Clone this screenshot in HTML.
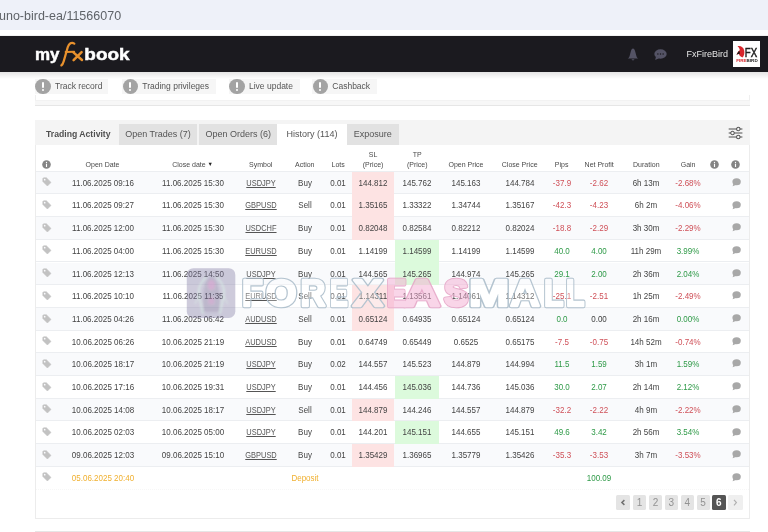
<!DOCTYPE html>
<html><head><meta charset="utf-8">
<style>
*{margin:0;padding:0;box-sizing:border-box}
html,body{width:768px;height:532px;overflow:hidden;background:#fff;font-family:"Liberation Sans",sans-serif;position:relative}
#root{position:absolute;left:0;top:0;width:768px;height:532px;will-change:transform}
.a{position:absolute}
svg{display:block}
.ct{position:absolute;width:100px;text-align:center;white-space:nowrap}
.d{font-size:9px;color:#444;transform:scaleX(0.89)}
.sym{color:#555;font-size:8.4px}
.sym u{text-decoration:underline;text-underline-offset:1px}
.row{position:absolute;left:36px;width:713px;border-bottom:1px solid #eceef1}
.ht{position:absolute;width:100px;text-align:center;white-space:nowrap;font-size:7px;color:#4a4a4a;line-height:10px}
.caret{font-size:5.5px;position:relative;top:-1px;color:#222}
.url{position:absolute;left:0;top:0;width:768px;height:29.5px;background:#eef1f9}
.urltxt{position:absolute;left:-1px;top:7px;font-size:13.3px;line-height:18px;color:#5f6368;transform:scaleX(0.94);transform-origin:0 0;white-space:nowrap}
.nav{position:absolute;left:0;top:36px;width:768px;height:36px;background:#1b1a1f}
.btn{position:absolute;top:79px;height:14.5px;background:#f6f6f6}
.btn .ic{position:absolute;left:0.3px;top:-0.3px;width:15.4px;height:15.4px;border-radius:50%;background:#a3a3a3}
.btn .ic:before{content:"";position:absolute;left:6.6px;top:3.1px;width:2.2px;height:6.5px;background:#fff;border-radius:1px}
.btn .ic:after{content:"";position:absolute;left:6.6px;top:10.3px;width:2.2px;height:2.2px;background:#fff;border-radius:1px}
.btn .t{position:absolute;top:0;left:20px;font-size:8.5px;line-height:14.5px;color:#555;white-space:nowrap}
.tab{position:absolute;top:124px;height:21px;font-size:9px;line-height:21px;color:#555;text-align:center;white-space:nowrap}
.pg{position:absolute;top:495.2px;height:15.3px;width:13px;background:#e4e4e4;color:#929292;font-size:10px;line-height:15.3px;text-align:center;border-radius:1.5px}
.pg svg{position:absolute;left:0;top:0}
</style></head><body><div id="root">
<div class="url"><div class="urltxt">uno-bird-ea/11566070</div></div>
<div class="a" style="left:0;top:34.8px;width:768px;height:1.2px;background:#f1f1f1"></div>
<div class="nav">
  <svg class="a" style="left:0;top:0" width="140" height="36" viewBox="0 36 140 36"><text x="35" y="59.6" font-family="Liberation Sans" font-weight="bold" font-size="17" fill="#fff" stroke="#fff" stroke-width="0.5" textLength="24.5" lengthAdjust="spacingAndGlyphs">my</text><path d="M74.3 43.6 C71.5 41.8 69 43.5 67.8 47 L63.8 61 C63 63.8 62.2 65 61.4 65.4" stroke="#e8912d" stroke-width="2.3" fill="none" stroke-linecap="round"/><path d="M65.6 52 L74.2 51.8" stroke="#e8912d" stroke-width="1.9" stroke-linecap="round"/><path d="M73.4 52.4 L82 60 M81.6 52.2 L73.6 60.2" stroke="#e8912d" stroke-width="2.5" stroke-linecap="round"/><text x="84.3" y="59.6" font-family="Liberation Sans" font-weight="bold" font-size="17" fill="#fff" stroke="#fff" stroke-width="0.5" textLength="45.3" lengthAdjust="spacingAndGlyphs">book</text></svg>
  <svg class="a" style="left:626.5px;top:11.5px" width="12" height="13" viewBox="0 0 12 13"><path d="M6 0.6 C5 0.6 4.3 1.8 3.8 3.6 L2.6 8 C2.2 9.4 1.4 10.2 0.6 10.6 L11.4 10.6 C10.6 10.2 9.8 9.4 9.4 8 L8.2 3.6 C7.7 1.8 7 0.6 6 0.6 Z" fill="#545365"/><path d="M4.6 11.3 L7.4 11.3 C7.3 12 6.8 12.4 6 12.4 C5.2 12.4 4.7 12 4.6 11.3Z" fill="#545365"/></svg>
  <svg class="a" style="left:654px;top:12.6px" width="13" height="12" viewBox="0 0 13 12"><ellipse cx="6.5" cy="5" rx="6.2" ry="4.7" fill="#545365"/><path d="M2 7.6 L1.2 11 L5 9.2 Z" fill="#545365"/><circle cx="3.9" cy="5" r="0.75" fill="#1b1a1f"/><circle cx="6.5" cy="5" r="0.75" fill="#1b1a1f"/><circle cx="9.1" cy="5" r="0.75" fill="#1b1a1f"/></svg>
  <div class="a" style="left:686.5px;top:11px;font-size:9px;line-height:14px;color:#e6e6e6;white-space:nowrap">FxFireBird</div>
  <div class="a" style="left:733px;top:4.8px;width:27.2px;height:26.2px;background:#fff">
    <svg width="27" height="26" viewBox="0 0 27 26"><path d="M4.5 5.2 C8 4.6 10.5 6.5 11.2 9.5 C11.8 12.5 11 15 9.5 16.4 C7.5 16 6.2 14.6 5.8 12.8 L3.6 13.6 C4.2 11.5 5.4 10 6.8 9.2 C6.6 7.6 5.8 6.2 4.5 5.2Z" fill="#d8262c"/><path d="M3.4 13.8 L6.2 9.6 L7 12.4 Z" fill="#1a1a1a"/><text x="11.8" y="16.4" font-family="Liberation Sans" font-size="12" fill="#1f1f1f" stroke="#1f1f1f" stroke-width="0.5" textLength="12.4" lengthAdjust="spacingAndGlyphs">FX</text><text x="3.2" y="21.2" font-family="Liberation Sans" font-weight="bold" font-size="4" fill="#d8262c" textLength="21.5" lengthAdjust="spacingAndGlyphs">FIRE<tspan fill="#1f1f1f">BIRD</tspan></text></svg>
  </div>
</div>
<div class="a" style="left:0;top:72px;width:768px;height:7px;background:linear-gradient(#e4e4e4,#fff)"></div>
<div class="btn" style="left:35px;width:73px"><div class="ic"></div><div class="t">Track record</div></div>
<div class="btn" style="left:122.3px;width:93.5px"><div class="ic"></div><div class="t">Trading privileges</div></div>
<div class="btn" style="left:229px;width:71px"><div class="ic"></div><div class="t">Live update</div></div>
<div class="btn" style="left:312.3px;width:64.6px"><div class="ic"></div><div class="t">Cashback</div></div>
<!-- top card bottom -->
<div class="a" style="left:35px;top:95px;width:1px;height:11px;background:#efefef"></div>
<div class="a" style="left:749px;top:95px;width:1px;height:11px;background:#efefef"></div>
<div class="a" style="left:35px;top:99.8px;width:715px;height:6.6px;background:#f7f7f7;border-top:1px solid #f2f2f2;border-bottom:1px solid #e6e6e6"></div>
<!-- table card -->
<div class="a" style="left:35px;top:120px;width:715px;height:398.8px;border:1px solid #ececec;border-top:none"></div>
<div class="a" style="left:35px;top:120px;width:715px;height:25px;background:#f4f4f4"></div>
<div class="tab" style="left:46.2px;width:auto;color:#505050;font-size:9.3px;font-weight:bold;text-align:left;transform:scaleX(0.93);transform-origin:0 0">Trading Activity</div>
<div class="tab" style="left:118.8px;width:78.3px;background:#e2e2e2">Open Trades (7)</div>
<div class="tab" style="left:199.3px;width:77.7px;background:#e2e2e2">Open Orders (6)</div>
<div class="tab" style="left:277px;width:70px;background:#fff;height:21px">History (114)</div>
<div class="tab" style="left:347px;width:51.7px;background:#e2e2e2">Exposure</div>
<svg class="a" style="left:727.5px;top:125.5px" width="15" height="14" viewBox="0 0 15 14"><g stroke="#555" stroke-width="1.05" fill="none"><line x1="0.7" y1="3" x2="14.4" y2="3"/><line x1="0.7" y1="7" x2="14.4" y2="7"/><line x1="0.7" y1="11" x2="14.4" y2="11"/><circle cx="10.3" cy="3" r="1.75" fill="#f4f4f4"/><circle cx="4.5" cy="7" r="1.75" fill="#f4f4f4"/><circle cx="10.3" cy="11" r="1.75" fill="#f4f4f4"/></g></svg>
<div class="a" style="left:36px;top:170.8px;width:713px;height:1px;background:#eceef1"></div>
<div class="a" style="left:42.3px;top:159.9px;width:9px;height:9px"><svg width="9" height="9" viewBox="0 0 9 9"><circle cx="4.5" cy="4.5" r="4.3" fill="#858585"/><rect x="3.95" y="3.8" width="1.1" height="3.2" fill="#fff"/><circle cx="4.5" cy="2.5" r="0.65" fill="#fff"/></svg></div>
<div class="ht" style="left:52.50px;top:159.50px">Open Date</div>
<div class="ht" style="left:142.60px;top:159.50px">Close date <span class="caret">&#9660;</span></div>
<div class="ht" style="left:210.70px;top:159.50px">Symbol</div>
<div class="ht" style="left:254.80px;top:159.50px">Action</div>
<div class="ht" style="left:288.20px;top:159.50px">Lots</div>
<div class="ht" style="left:323.10px;top:149.50px">SL</div>
<div class="ht" style="left:323.10px;top:159.50px">(Price)</div>
<div class="ht" style="left:367.20px;top:149.50px">TP</div>
<div class="ht" style="left:367.20px;top:159.50px">(Price)</div>
<div class="ht" style="left:416.00px;top:159.50px">Open Price</div>
<div class="ht" style="left:469.70px;top:159.50px">Close Price</div>
<div class="ht" style="left:511.60px;top:159.50px">Pips</div>
<div class="ht" style="left:549.20px;top:159.50px">Net Profit</div>
<div class="ht" style="left:596.30px;top:159.50px">Duration</div>
<div class="ht" style="left:638.10px;top:159.50px">Gain</div>
<div class="a" style="left:710.1px;top:159.5px;width:9px;height:9px"><svg width="9" height="9" viewBox="0 0 9 9"><circle cx="4.5" cy="4.5" r="4.3" fill="#858585"/><rect x="3.95" y="3.8" width="1.1" height="3.2" fill="#fff"/><circle cx="4.5" cy="2.5" r="0.65" fill="#fff"/></svg></div>
<div class="a" style="left:731.1px;top:159.5px;width:9px;height:9px"><svg width="9" height="9" viewBox="0 0 9 9"><circle cx="4.5" cy="4.5" r="4.3" fill="#858585"/><rect x="3.95" y="3.8" width="1.1" height="3.2" fill="#fff"/><circle cx="4.5" cy="2.5" r="0.65" fill="#fff"/></svg></div>
<div class="row" style="top:171.70px;height:22.70px;background:#f9fafc"></div>
<div class="a" style="left:352px;width:42px;top:171.70px;height:23.30px;background:#fde3e3"></div>
<div class="row" style="top:194.40px;height:22.70px;background:#ffffff"></div>
<div class="a" style="left:352px;width:42px;top:194.40px;height:23.30px;background:#fde3e3"></div>
<div class="row" style="top:217.10px;height:22.70px;background:#f9fafc"></div>
<div class="a" style="left:352px;width:42px;top:217.10px;height:23.30px;background:#fde3e3"></div>
<div class="row" style="top:239.80px;height:22.70px;background:#ffffff"></div>
<div class="a" style="left:395px;width:44px;top:239.80px;height:23.30px;background:#dcfadc"></div>
<div class="row" style="top:262.50px;height:22.70px;background:#f9fafc"></div>
<div class="a" style="left:395px;width:44px;top:262.50px;height:23.30px;background:#dcfadc"></div>
<div class="row" style="top:285.20px;height:22.70px;background:#ffffff"></div>
<div class="a" style="left:352px;width:42px;top:285.20px;height:23.30px;background:#fde3e3"></div>
<div class="row" style="top:307.90px;height:22.70px;background:#f9fafc"></div>
<div class="a" style="left:352px;width:42px;top:307.90px;height:23.30px;background:#fde3e3"></div>
<div class="row" style="top:330.60px;height:22.70px;background:#ffffff"></div>
<div class="row" style="top:353.30px;height:22.70px;background:#f9fafc"></div>
<div class="row" style="top:376.00px;height:22.70px;background:#ffffff"></div>
<div class="a" style="left:395px;width:44px;top:376.00px;height:23.30px;background:#dcfadc"></div>
<div class="row" style="top:398.70px;height:22.70px;background:#f9fafc"></div>
<div class="a" style="left:352px;width:42px;top:398.70px;height:23.30px;background:#fde3e3"></div>
<div class="row" style="top:421.40px;height:22.70px;background:#ffffff"></div>
<div class="a" style="left:395px;width:44px;top:421.40px;height:23.30px;background:#dcfadc"></div>
<div class="row" style="top:444.10px;height:22.70px;background:#f9fafc"></div>
<div class="a" style="left:352px;width:42px;top:444.10px;height:23.30px;background:#fde3e3"></div>
<div class="a" style="left:42px;top:177.30px;width:10px;height:10px"><svg width="10" height="10" viewBox="0 0 10 10"><path d="M0.8 1.6 L0.8 4.4 L5.4 9 L9 5.4 L4.4 0.8 L1.6 0.8 Z" fill="#c2c2c2" stroke="#c2c2c2" stroke-width="0.6" stroke-linejoin="round"/><circle cx="2.7" cy="2.7" r="0.85" fill="#fafbfd"/></svg></div>
<div class="ct d" style="left:52.50px;top:171.70px;height:22.70px;line-height:22.70px;">11.06.2025 09:16</div>
<div class="ct d" style="left:142.60px;top:171.70px;height:22.70px;line-height:22.70px;">11.06.2025 15:30</div>
<div class="ct d sym" style="left:210.70px;top:171.70px;height:22.70px;line-height:22.70px;"><u>USDJPY</u></div>
<div class="ct d" style="left:254.80px;top:171.70px;height:22.70px;line-height:22.70px;">Buy</div>
<div class="ct d" style="left:288.20px;top:171.70px;height:22.70px;line-height:22.70px;">0.01</div>
<div class="ct d" style="left:323.10px;top:171.70px;height:22.70px;line-height:22.70px;">144.812</div>
<div class="ct d" style="left:367.20px;top:171.70px;height:22.70px;line-height:22.70px;">145.762</div>
<div class="ct d" style="left:416.00px;top:171.70px;height:22.70px;line-height:22.70px;">145.163</div>
<div class="ct d" style="left:469.70px;top:171.70px;height:22.70px;line-height:22.70px;">144.784</div>
<div class="ct d" style="left:511.60px;top:171.70px;height:22.70px;line-height:22.70px;color:#cf5058">-37.9</div>
<div class="ct d" style="left:549.20px;top:171.70px;height:22.70px;line-height:22.70px;color:#cf5058">-2.62</div>
<div class="ct d" style="left:596.30px;top:171.70px;height:22.70px;line-height:22.70px;">6h 13m</div>
<div class="ct d" style="left:638.10px;top:171.70px;height:22.70px;line-height:22.70px;color:#cf5058">-2.68%</div>
<div class="a" style="left:731.5px;top:177.80px;width:10px;height:9px"><svg width="10" height="9" viewBox="0 0 10 9"><ellipse cx="4.6" cy="3.7" rx="4.2" ry="3.5" fill="#a8a8a8"/><path d="M1.5 5.6 L0.6 8.3 L3.8 6.9 Z" fill="#a8a8a8"/></svg></div>
<div class="a" style="left:42px;top:200.00px;width:10px;height:10px"><svg width="10" height="10" viewBox="0 0 10 10"><path d="M0.8 1.6 L0.8 4.4 L5.4 9 L9 5.4 L4.4 0.8 L1.6 0.8 Z" fill="#c2c2c2" stroke="#c2c2c2" stroke-width="0.6" stroke-linejoin="round"/><circle cx="2.7" cy="2.7" r="0.85" fill="#fafbfd"/></svg></div>
<div class="ct d" style="left:52.50px;top:194.40px;height:22.70px;line-height:22.70px;">11.06.2025 09:27</div>
<div class="ct d" style="left:142.60px;top:194.40px;height:22.70px;line-height:22.70px;">11.06.2025 15:30</div>
<div class="ct d sym" style="left:210.70px;top:194.40px;height:22.70px;line-height:22.70px;"><u>GBPUSD</u></div>
<div class="ct d" style="left:254.80px;top:194.40px;height:22.70px;line-height:22.70px;">Sell</div>
<div class="ct d" style="left:288.20px;top:194.40px;height:22.70px;line-height:22.70px;">0.01</div>
<div class="ct d" style="left:323.10px;top:194.40px;height:22.70px;line-height:22.70px;">1.35165</div>
<div class="ct d" style="left:367.20px;top:194.40px;height:22.70px;line-height:22.70px;">1.33322</div>
<div class="ct d" style="left:416.00px;top:194.40px;height:22.70px;line-height:22.70px;">1.34744</div>
<div class="ct d" style="left:469.70px;top:194.40px;height:22.70px;line-height:22.70px;">1.35167</div>
<div class="ct d" style="left:511.60px;top:194.40px;height:22.70px;line-height:22.70px;color:#cf5058">-42.3</div>
<div class="ct d" style="left:549.20px;top:194.40px;height:22.70px;line-height:22.70px;color:#cf5058">-4.23</div>
<div class="ct d" style="left:596.30px;top:194.40px;height:22.70px;line-height:22.70px;">6h 2m</div>
<div class="ct d" style="left:638.10px;top:194.40px;height:22.70px;line-height:22.70px;color:#cf5058">-4.06%</div>
<div class="a" style="left:731.5px;top:200.50px;width:10px;height:9px"><svg width="10" height="9" viewBox="0 0 10 9"><ellipse cx="4.6" cy="3.7" rx="4.2" ry="3.5" fill="#a8a8a8"/><path d="M1.5 5.6 L0.6 8.3 L3.8 6.9 Z" fill="#a8a8a8"/></svg></div>
<div class="a" style="left:42px;top:222.70px;width:10px;height:10px"><svg width="10" height="10" viewBox="0 0 10 10"><path d="M0.8 1.6 L0.8 4.4 L5.4 9 L9 5.4 L4.4 0.8 L1.6 0.8 Z" fill="#c2c2c2" stroke="#c2c2c2" stroke-width="0.6" stroke-linejoin="round"/><circle cx="2.7" cy="2.7" r="0.85" fill="#fafbfd"/></svg></div>
<div class="ct d" style="left:52.50px;top:217.10px;height:22.70px;line-height:22.70px;">11.06.2025 12:00</div>
<div class="ct d" style="left:142.60px;top:217.10px;height:22.70px;line-height:22.70px;">11.06.2025 15:30</div>
<div class="ct d sym" style="left:210.70px;top:217.10px;height:22.70px;line-height:22.70px;"><u>USDCHF</u></div>
<div class="ct d" style="left:254.80px;top:217.10px;height:22.70px;line-height:22.70px;">Buy</div>
<div class="ct d" style="left:288.20px;top:217.10px;height:22.70px;line-height:22.70px;">0.01</div>
<div class="ct d" style="left:323.10px;top:217.10px;height:22.70px;line-height:22.70px;">0.82048</div>
<div class="ct d" style="left:367.20px;top:217.10px;height:22.70px;line-height:22.70px;">0.82584</div>
<div class="ct d" style="left:416.00px;top:217.10px;height:22.70px;line-height:22.70px;">0.82212</div>
<div class="ct d" style="left:469.70px;top:217.10px;height:22.70px;line-height:22.70px;">0.82024</div>
<div class="ct d" style="left:511.60px;top:217.10px;height:22.70px;line-height:22.70px;color:#cf5058">-18.8</div>
<div class="ct d" style="left:549.20px;top:217.10px;height:22.70px;line-height:22.70px;color:#cf5058">-2.29</div>
<div class="ct d" style="left:596.30px;top:217.10px;height:22.70px;line-height:22.70px;">3h 30m</div>
<div class="ct d" style="left:638.10px;top:217.10px;height:22.70px;line-height:22.70px;color:#cf5058">-2.29%</div>
<div class="a" style="left:731.5px;top:223.20px;width:10px;height:9px"><svg width="10" height="9" viewBox="0 0 10 9"><ellipse cx="4.6" cy="3.7" rx="4.2" ry="3.5" fill="#a8a8a8"/><path d="M1.5 5.6 L0.6 8.3 L3.8 6.9 Z" fill="#a8a8a8"/></svg></div>
<div class="a" style="left:42px;top:245.40px;width:10px;height:10px"><svg width="10" height="10" viewBox="0 0 10 10"><path d="M0.8 1.6 L0.8 4.4 L5.4 9 L9 5.4 L4.4 0.8 L1.6 0.8 Z" fill="#c2c2c2" stroke="#c2c2c2" stroke-width="0.6" stroke-linejoin="round"/><circle cx="2.7" cy="2.7" r="0.85" fill="#fafbfd"/></svg></div>
<div class="ct d" style="left:52.50px;top:239.80px;height:22.70px;line-height:22.70px;">11.06.2025 04:00</div>
<div class="ct d" style="left:142.60px;top:239.80px;height:22.70px;line-height:22.70px;">11.06.2025 15:30</div>
<div class="ct d sym" style="left:210.70px;top:239.80px;height:22.70px;line-height:22.70px;"><u>EURUSD</u></div>
<div class="ct d" style="left:254.80px;top:239.80px;height:22.70px;line-height:22.70px;">Buy</div>
<div class="ct d" style="left:288.20px;top:239.80px;height:22.70px;line-height:22.70px;">0.01</div>
<div class="ct d" style="left:323.10px;top:239.80px;height:22.70px;line-height:22.70px;">1.14199</div>
<div class="ct d" style="left:367.20px;top:239.80px;height:22.70px;line-height:22.70px;">1.14599</div>
<div class="ct d" style="left:416.00px;top:239.80px;height:22.70px;line-height:22.70px;">1.14199</div>
<div class="ct d" style="left:469.70px;top:239.80px;height:22.70px;line-height:22.70px;">1.14599</div>
<div class="ct d" style="left:511.60px;top:239.80px;height:22.70px;line-height:22.70px;color:#2f9a48">40.0</div>
<div class="ct d" style="left:549.20px;top:239.80px;height:22.70px;line-height:22.70px;color:#2f9a48">4.00</div>
<div class="ct d" style="left:596.30px;top:239.80px;height:22.70px;line-height:22.70px;">11h 29m</div>
<div class="ct d" style="left:638.10px;top:239.80px;height:22.70px;line-height:22.70px;color:#2f9a48">3.99%</div>
<div class="a" style="left:731.5px;top:245.90px;width:10px;height:9px"><svg width="10" height="9" viewBox="0 0 10 9"><ellipse cx="4.6" cy="3.7" rx="4.2" ry="3.5" fill="#a8a8a8"/><path d="M1.5 5.6 L0.6 8.3 L3.8 6.9 Z" fill="#a8a8a8"/></svg></div>
<div class="a" style="left:42px;top:268.10px;width:10px;height:10px"><svg width="10" height="10" viewBox="0 0 10 10"><path d="M0.8 1.6 L0.8 4.4 L5.4 9 L9 5.4 L4.4 0.8 L1.6 0.8 Z" fill="#c2c2c2" stroke="#c2c2c2" stroke-width="0.6" stroke-linejoin="round"/><circle cx="2.7" cy="2.7" r="0.85" fill="#fafbfd"/></svg></div>
<div class="ct d" style="left:52.50px;top:262.50px;height:22.70px;line-height:22.70px;">11.06.2025 12:13</div>
<div class="ct d" style="left:142.60px;top:262.50px;height:22.70px;line-height:22.70px;">11.06.2025 14:50</div>
<div class="ct d sym" style="left:210.70px;top:262.50px;height:22.70px;line-height:22.70px;"><u>USDJPY</u></div>
<div class="ct d" style="left:254.80px;top:262.50px;height:22.70px;line-height:22.70px;">Buy</div>
<div class="ct d" style="left:288.20px;top:262.50px;height:22.70px;line-height:22.70px;">0.01</div>
<div class="ct d" style="left:323.10px;top:262.50px;height:22.70px;line-height:22.70px;">144.565</div>
<div class="ct d" style="left:367.20px;top:262.50px;height:22.70px;line-height:22.70px;">145.265</div>
<div class="ct d" style="left:416.00px;top:262.50px;height:22.70px;line-height:22.70px;">144.974</div>
<div class="ct d" style="left:469.70px;top:262.50px;height:22.70px;line-height:22.70px;">145.265</div>
<div class="ct d" style="left:511.60px;top:262.50px;height:22.70px;line-height:22.70px;color:#2f9a48">29.1</div>
<div class="ct d" style="left:549.20px;top:262.50px;height:22.70px;line-height:22.70px;color:#2f9a48">2.00</div>
<div class="ct d" style="left:596.30px;top:262.50px;height:22.70px;line-height:22.70px;">2h 36m</div>
<div class="ct d" style="left:638.10px;top:262.50px;height:22.70px;line-height:22.70px;color:#2f9a48">2.04%</div>
<div class="a" style="left:731.5px;top:268.60px;width:10px;height:9px"><svg width="10" height="9" viewBox="0 0 10 9"><ellipse cx="4.6" cy="3.7" rx="4.2" ry="3.5" fill="#a8a8a8"/><path d="M1.5 5.6 L0.6 8.3 L3.8 6.9 Z" fill="#a8a8a8"/></svg></div>
<div class="a" style="left:42px;top:290.80px;width:10px;height:10px"><svg width="10" height="10" viewBox="0 0 10 10"><path d="M0.8 1.6 L0.8 4.4 L5.4 9 L9 5.4 L4.4 0.8 L1.6 0.8 Z" fill="#c2c2c2" stroke="#c2c2c2" stroke-width="0.6" stroke-linejoin="round"/><circle cx="2.7" cy="2.7" r="0.85" fill="#fafbfd"/></svg></div>
<div class="ct d" style="left:52.50px;top:285.20px;height:22.70px;line-height:22.70px;">11.06.2025 10:10</div>
<div class="ct d" style="left:142.60px;top:285.20px;height:22.70px;line-height:22.70px;">11.06.2025 11:35</div>
<div class="ct d sym" style="left:210.70px;top:285.20px;height:22.70px;line-height:22.70px;"><u>EURUSD</u></div>
<div class="ct d" style="left:254.80px;top:285.20px;height:22.70px;line-height:22.70px;">Sell</div>
<div class="ct d" style="left:288.20px;top:285.20px;height:22.70px;line-height:22.70px;">0.01</div>
<div class="ct d" style="left:323.10px;top:285.20px;height:22.70px;line-height:22.70px;">1.14311</div>
<div class="ct d" style="left:367.20px;top:285.20px;height:22.70px;line-height:22.70px;">1.13561</div>
<div class="ct d" style="left:416.00px;top:285.20px;height:22.70px;line-height:22.70px;">1.14061</div>
<div class="ct d" style="left:469.70px;top:285.20px;height:22.70px;line-height:22.70px;">1.14312</div>
<div class="ct d" style="left:511.60px;top:285.20px;height:22.70px;line-height:22.70px;color:#cf5058">-25.1</div>
<div class="ct d" style="left:549.20px;top:285.20px;height:22.70px;line-height:22.70px;color:#cf5058">-2.51</div>
<div class="ct d" style="left:596.30px;top:285.20px;height:22.70px;line-height:22.70px;">1h 25m</div>
<div class="ct d" style="left:638.10px;top:285.20px;height:22.70px;line-height:22.70px;color:#cf5058">-2.49%</div>
<div class="a" style="left:731.5px;top:291.30px;width:10px;height:9px"><svg width="10" height="9" viewBox="0 0 10 9"><ellipse cx="4.6" cy="3.7" rx="4.2" ry="3.5" fill="#a8a8a8"/><path d="M1.5 5.6 L0.6 8.3 L3.8 6.9 Z" fill="#a8a8a8"/></svg></div>
<div class="a" style="left:42px;top:313.50px;width:10px;height:10px"><svg width="10" height="10" viewBox="0 0 10 10"><path d="M0.8 1.6 L0.8 4.4 L5.4 9 L9 5.4 L4.4 0.8 L1.6 0.8 Z" fill="#c2c2c2" stroke="#c2c2c2" stroke-width="0.6" stroke-linejoin="round"/><circle cx="2.7" cy="2.7" r="0.85" fill="#fafbfd"/></svg></div>
<div class="ct d" style="left:52.50px;top:307.90px;height:22.70px;line-height:22.70px;">11.06.2025 04:26</div>
<div class="ct d" style="left:142.60px;top:307.90px;height:22.70px;line-height:22.70px;">11.06.2025 06:42</div>
<div class="ct d sym" style="left:210.70px;top:307.90px;height:22.70px;line-height:22.70px;"><u>AUDUSD</u></div>
<div class="ct d" style="left:254.80px;top:307.90px;height:22.70px;line-height:22.70px;">Sell</div>
<div class="ct d" style="left:288.20px;top:307.90px;height:22.70px;line-height:22.70px;">0.01</div>
<div class="ct d" style="left:323.10px;top:307.90px;height:22.70px;line-height:22.70px;">0.65124</div>
<div class="ct d" style="left:367.20px;top:307.90px;height:22.70px;line-height:22.70px;">0.64935</div>
<div class="ct d" style="left:416.00px;top:307.90px;height:22.70px;line-height:22.70px;">0.65124</div>
<div class="ct d" style="left:469.70px;top:307.90px;height:22.70px;line-height:22.70px;">0.65124</div>
<div class="ct d" style="left:511.60px;top:307.90px;height:22.70px;line-height:22.70px;color:#2f9a48">0.0</div>
<div class="ct d" style="left:549.20px;top:307.90px;height:22.70px;line-height:22.70px;color:#3d3d3d">0.00</div>
<div class="ct d" style="left:596.30px;top:307.90px;height:22.70px;line-height:22.70px;">2h 16m</div>
<div class="ct d" style="left:638.10px;top:307.90px;height:22.70px;line-height:22.70px;color:#2f9a48">0.00%</div>
<div class="a" style="left:731.5px;top:314.00px;width:10px;height:9px"><svg width="10" height="9" viewBox="0 0 10 9"><ellipse cx="4.6" cy="3.7" rx="4.2" ry="3.5" fill="#a8a8a8"/><path d="M1.5 5.6 L0.6 8.3 L3.8 6.9 Z" fill="#a8a8a8"/></svg></div>
<div class="a" style="left:42px;top:336.20px;width:10px;height:10px"><svg width="10" height="10" viewBox="0 0 10 10"><path d="M0.8 1.6 L0.8 4.4 L5.4 9 L9 5.4 L4.4 0.8 L1.6 0.8 Z" fill="#c2c2c2" stroke="#c2c2c2" stroke-width="0.6" stroke-linejoin="round"/><circle cx="2.7" cy="2.7" r="0.85" fill="#fafbfd"/></svg></div>
<div class="ct d" style="left:52.50px;top:330.60px;height:22.70px;line-height:22.70px;">10.06.2025 06:26</div>
<div class="ct d" style="left:142.60px;top:330.60px;height:22.70px;line-height:22.70px;">10.06.2025 21:19</div>
<div class="ct d sym" style="left:210.70px;top:330.60px;height:22.70px;line-height:22.70px;"><u>AUDUSD</u></div>
<div class="ct d" style="left:254.80px;top:330.60px;height:22.70px;line-height:22.70px;">Buy</div>
<div class="ct d" style="left:288.20px;top:330.60px;height:22.70px;line-height:22.70px;">0.01</div>
<div class="ct d" style="left:323.10px;top:330.60px;height:22.70px;line-height:22.70px;">0.64749</div>
<div class="ct d" style="left:367.20px;top:330.60px;height:22.70px;line-height:22.70px;">0.65449</div>
<div class="ct d" style="left:416.00px;top:330.60px;height:22.70px;line-height:22.70px;">0.6525</div>
<div class="ct d" style="left:469.70px;top:330.60px;height:22.70px;line-height:22.70px;">0.65175</div>
<div class="ct d" style="left:511.60px;top:330.60px;height:22.70px;line-height:22.70px;color:#cf5058">-7.5</div>
<div class="ct d" style="left:549.20px;top:330.60px;height:22.70px;line-height:22.70px;color:#cf5058">-0.75</div>
<div class="ct d" style="left:596.30px;top:330.60px;height:22.70px;line-height:22.70px;">14h 52m</div>
<div class="ct d" style="left:638.10px;top:330.60px;height:22.70px;line-height:22.70px;color:#cf5058">-0.74%</div>
<div class="a" style="left:731.5px;top:336.70px;width:10px;height:9px"><svg width="10" height="9" viewBox="0 0 10 9"><ellipse cx="4.6" cy="3.7" rx="4.2" ry="3.5" fill="#a8a8a8"/><path d="M1.5 5.6 L0.6 8.3 L3.8 6.9 Z" fill="#a8a8a8"/></svg></div>
<div class="a" style="left:42px;top:358.90px;width:10px;height:10px"><svg width="10" height="10" viewBox="0 0 10 10"><path d="M0.8 1.6 L0.8 4.4 L5.4 9 L9 5.4 L4.4 0.8 L1.6 0.8 Z" fill="#c2c2c2" stroke="#c2c2c2" stroke-width="0.6" stroke-linejoin="round"/><circle cx="2.7" cy="2.7" r="0.85" fill="#fafbfd"/></svg></div>
<div class="ct d" style="left:52.50px;top:353.30px;height:22.70px;line-height:22.70px;">10.06.2025 18:17</div>
<div class="ct d" style="left:142.60px;top:353.30px;height:22.70px;line-height:22.70px;">10.06.2025 21:19</div>
<div class="ct d sym" style="left:210.70px;top:353.30px;height:22.70px;line-height:22.70px;"><u>USDJPY</u></div>
<div class="ct d" style="left:254.80px;top:353.30px;height:22.70px;line-height:22.70px;">Buy</div>
<div class="ct d" style="left:288.20px;top:353.30px;height:22.70px;line-height:22.70px;">0.02</div>
<div class="ct d" style="left:323.10px;top:353.30px;height:22.70px;line-height:22.70px;">144.557</div>
<div class="ct d" style="left:367.20px;top:353.30px;height:22.70px;line-height:22.70px;">145.523</div>
<div class="ct d" style="left:416.00px;top:353.30px;height:22.70px;line-height:22.70px;">144.879</div>
<div class="ct d" style="left:469.70px;top:353.30px;height:22.70px;line-height:22.70px;">144.994</div>
<div class="ct d" style="left:511.60px;top:353.30px;height:22.70px;line-height:22.70px;color:#2f9a48">11.5</div>
<div class="ct d" style="left:549.20px;top:353.30px;height:22.70px;line-height:22.70px;color:#2f9a48">1.59</div>
<div class="ct d" style="left:596.30px;top:353.30px;height:22.70px;line-height:22.70px;">3h 1m</div>
<div class="ct d" style="left:638.10px;top:353.30px;height:22.70px;line-height:22.70px;color:#2f9a48">1.59%</div>
<div class="a" style="left:731.5px;top:359.40px;width:10px;height:9px"><svg width="10" height="9" viewBox="0 0 10 9"><ellipse cx="4.6" cy="3.7" rx="4.2" ry="3.5" fill="#a8a8a8"/><path d="M1.5 5.6 L0.6 8.3 L3.8 6.9 Z" fill="#a8a8a8"/></svg></div>
<div class="a" style="left:42px;top:381.60px;width:10px;height:10px"><svg width="10" height="10" viewBox="0 0 10 10"><path d="M0.8 1.6 L0.8 4.4 L5.4 9 L9 5.4 L4.4 0.8 L1.6 0.8 Z" fill="#c2c2c2" stroke="#c2c2c2" stroke-width="0.6" stroke-linejoin="round"/><circle cx="2.7" cy="2.7" r="0.85" fill="#fafbfd"/></svg></div>
<div class="ct d" style="left:52.50px;top:376.00px;height:22.70px;line-height:22.70px;">10.06.2025 17:16</div>
<div class="ct d" style="left:142.60px;top:376.00px;height:22.70px;line-height:22.70px;">10.06.2025 19:31</div>
<div class="ct d sym" style="left:210.70px;top:376.00px;height:22.70px;line-height:22.70px;"><u>USDJPY</u></div>
<div class="ct d" style="left:254.80px;top:376.00px;height:22.70px;line-height:22.70px;">Buy</div>
<div class="ct d" style="left:288.20px;top:376.00px;height:22.70px;line-height:22.70px;">0.01</div>
<div class="ct d" style="left:323.10px;top:376.00px;height:22.70px;line-height:22.70px;">144.456</div>
<div class="ct d" style="left:367.20px;top:376.00px;height:22.70px;line-height:22.70px;">145.036</div>
<div class="ct d" style="left:416.00px;top:376.00px;height:22.70px;line-height:22.70px;">144.736</div>
<div class="ct d" style="left:469.70px;top:376.00px;height:22.70px;line-height:22.70px;">145.036</div>
<div class="ct d" style="left:511.60px;top:376.00px;height:22.70px;line-height:22.70px;color:#2f9a48">30.0</div>
<div class="ct d" style="left:549.20px;top:376.00px;height:22.70px;line-height:22.70px;color:#2f9a48">2.07</div>
<div class="ct d" style="left:596.30px;top:376.00px;height:22.70px;line-height:22.70px;">2h 14m</div>
<div class="ct d" style="left:638.10px;top:376.00px;height:22.70px;line-height:22.70px;color:#2f9a48">2.12%</div>
<div class="a" style="left:731.5px;top:382.10px;width:10px;height:9px"><svg width="10" height="9" viewBox="0 0 10 9"><ellipse cx="4.6" cy="3.7" rx="4.2" ry="3.5" fill="#a8a8a8"/><path d="M1.5 5.6 L0.6 8.3 L3.8 6.9 Z" fill="#a8a8a8"/></svg></div>
<div class="a" style="left:42px;top:404.30px;width:10px;height:10px"><svg width="10" height="10" viewBox="0 0 10 10"><path d="M0.8 1.6 L0.8 4.4 L5.4 9 L9 5.4 L4.4 0.8 L1.6 0.8 Z" fill="#c2c2c2" stroke="#c2c2c2" stroke-width="0.6" stroke-linejoin="round"/><circle cx="2.7" cy="2.7" r="0.85" fill="#fafbfd"/></svg></div>
<div class="ct d" style="left:52.50px;top:398.70px;height:22.70px;line-height:22.70px;">10.06.2025 14:08</div>
<div class="ct d" style="left:142.60px;top:398.70px;height:22.70px;line-height:22.70px;">10.06.2025 18:17</div>
<div class="ct d sym" style="left:210.70px;top:398.70px;height:22.70px;line-height:22.70px;"><u>USDJPY</u></div>
<div class="ct d" style="left:254.80px;top:398.70px;height:22.70px;line-height:22.70px;">Sell</div>
<div class="ct d" style="left:288.20px;top:398.70px;height:22.70px;line-height:22.70px;">0.01</div>
<div class="ct d" style="left:323.10px;top:398.70px;height:22.70px;line-height:22.70px;">144.879</div>
<div class="ct d" style="left:367.20px;top:398.70px;height:22.70px;line-height:22.70px;">144.246</div>
<div class="ct d" style="left:416.00px;top:398.70px;height:22.70px;line-height:22.70px;">144.557</div>
<div class="ct d" style="left:469.70px;top:398.70px;height:22.70px;line-height:22.70px;">144.879</div>
<div class="ct d" style="left:511.60px;top:398.70px;height:22.70px;line-height:22.70px;color:#cf5058">-32.2</div>
<div class="ct d" style="left:549.20px;top:398.70px;height:22.70px;line-height:22.70px;color:#cf5058">-2.22</div>
<div class="ct d" style="left:596.30px;top:398.70px;height:22.70px;line-height:22.70px;">4h 9m</div>
<div class="ct d" style="left:638.10px;top:398.70px;height:22.70px;line-height:22.70px;color:#cf5058">-2.22%</div>
<div class="a" style="left:731.5px;top:404.80px;width:10px;height:9px"><svg width="10" height="9" viewBox="0 0 10 9"><ellipse cx="4.6" cy="3.7" rx="4.2" ry="3.5" fill="#a8a8a8"/><path d="M1.5 5.6 L0.6 8.3 L3.8 6.9 Z" fill="#a8a8a8"/></svg></div>
<div class="a" style="left:42px;top:427.00px;width:10px;height:10px"><svg width="10" height="10" viewBox="0 0 10 10"><path d="M0.8 1.6 L0.8 4.4 L5.4 9 L9 5.4 L4.4 0.8 L1.6 0.8 Z" fill="#c2c2c2" stroke="#c2c2c2" stroke-width="0.6" stroke-linejoin="round"/><circle cx="2.7" cy="2.7" r="0.85" fill="#fafbfd"/></svg></div>
<div class="ct d" style="left:52.50px;top:421.40px;height:22.70px;line-height:22.70px;">10.06.2025 02:03</div>
<div class="ct d" style="left:142.60px;top:421.40px;height:22.70px;line-height:22.70px;">10.06.2025 05:00</div>
<div class="ct d sym" style="left:210.70px;top:421.40px;height:22.70px;line-height:22.70px;"><u>USDJPY</u></div>
<div class="ct d" style="left:254.80px;top:421.40px;height:22.70px;line-height:22.70px;">Buy</div>
<div class="ct d" style="left:288.20px;top:421.40px;height:22.70px;line-height:22.70px;">0.01</div>
<div class="ct d" style="left:323.10px;top:421.40px;height:22.70px;line-height:22.70px;">144.201</div>
<div class="ct d" style="left:367.20px;top:421.40px;height:22.70px;line-height:22.70px;">145.151</div>
<div class="ct d" style="left:416.00px;top:421.40px;height:22.70px;line-height:22.70px;">144.655</div>
<div class="ct d" style="left:469.70px;top:421.40px;height:22.70px;line-height:22.70px;">145.151</div>
<div class="ct d" style="left:511.60px;top:421.40px;height:22.70px;line-height:22.70px;color:#2f9a48">49.6</div>
<div class="ct d" style="left:549.20px;top:421.40px;height:22.70px;line-height:22.70px;color:#2f9a48">3.42</div>
<div class="ct d" style="left:596.30px;top:421.40px;height:22.70px;line-height:22.70px;">2h 56m</div>
<div class="ct d" style="left:638.10px;top:421.40px;height:22.70px;line-height:22.70px;color:#2f9a48">3.54%</div>
<div class="a" style="left:731.5px;top:427.50px;width:10px;height:9px"><svg width="10" height="9" viewBox="0 0 10 9"><ellipse cx="4.6" cy="3.7" rx="4.2" ry="3.5" fill="#a8a8a8"/><path d="M1.5 5.6 L0.6 8.3 L3.8 6.9 Z" fill="#a8a8a8"/></svg></div>
<div class="a" style="left:42px;top:449.70px;width:10px;height:10px"><svg width="10" height="10" viewBox="0 0 10 10"><path d="M0.8 1.6 L0.8 4.4 L5.4 9 L9 5.4 L4.4 0.8 L1.6 0.8 Z" fill="#c2c2c2" stroke="#c2c2c2" stroke-width="0.6" stroke-linejoin="round"/><circle cx="2.7" cy="2.7" r="0.85" fill="#fafbfd"/></svg></div>
<div class="ct d" style="left:52.50px;top:444.10px;height:22.70px;line-height:22.70px;">09.06.2025 12:03</div>
<div class="ct d" style="left:142.60px;top:444.10px;height:22.70px;line-height:22.70px;">09.06.2025 15:10</div>
<div class="ct d sym" style="left:210.70px;top:444.10px;height:22.70px;line-height:22.70px;"><u>GBPUSD</u></div>
<div class="ct d" style="left:254.80px;top:444.10px;height:22.70px;line-height:22.70px;">Buy</div>
<div class="ct d" style="left:288.20px;top:444.10px;height:22.70px;line-height:22.70px;">0.01</div>
<div class="ct d" style="left:323.10px;top:444.10px;height:22.70px;line-height:22.70px;">1.35429</div>
<div class="ct d" style="left:367.20px;top:444.10px;height:22.70px;line-height:22.70px;">1.36965</div>
<div class="ct d" style="left:416.00px;top:444.10px;height:22.70px;line-height:22.70px;">1.35779</div>
<div class="ct d" style="left:469.70px;top:444.10px;height:22.70px;line-height:22.70px;">1.35426</div>
<div class="ct d" style="left:511.60px;top:444.10px;height:22.70px;line-height:22.70px;color:#cf5058">-35.3</div>
<div class="ct d" style="left:549.20px;top:444.10px;height:22.70px;line-height:22.70px;color:#cf5058">-3.53</div>
<div class="ct d" style="left:596.30px;top:444.10px;height:22.70px;line-height:22.70px;">3h 7m</div>
<div class="ct d" style="left:638.10px;top:444.10px;height:22.70px;line-height:22.70px;color:#cf5058">-3.53%</div>
<div class="a" style="left:731.5px;top:450.20px;width:10px;height:9px"><svg width="10" height="9" viewBox="0 0 10 9"><ellipse cx="4.6" cy="3.7" rx="4.2" ry="3.5" fill="#a8a8a8"/><path d="M1.5 5.6 L0.6 8.3 L3.8 6.9 Z" fill="#a8a8a8"/></svg></div>
<div class="a" style="left:42px;top:472.40px;width:10px;height:10px"><svg width="10" height="10" viewBox="0 0 10 10"><path d="M0.8 1.6 L0.8 4.4 L5.4 9 L9 5.4 L4.4 0.8 L1.6 0.8 Z" fill="#c2c2c2" stroke="#c2c2c2" stroke-width="0.6" stroke-linejoin="round"/><circle cx="2.7" cy="2.7" r="0.85" fill="#fafbfd"/></svg></div>
<div class="ct d" style="left:52.50px;top:466.80px;height:22.70px;line-height:22.70px;color:#f0b030">05.06.2025 20:40</div>
<div class="ct d" style="left:254.80px;top:466.80px;height:22.70px;line-height:22.70px;color:#f0b030">Deposit</div>
<div class="ct d" style="left:549.20px;top:466.80px;height:22.70px;line-height:22.70px;color:#2f9a48">100.09</div>
<div class="a" style="left:731.5px;top:472.90px;width:10px;height:9px"><svg width="10" height="9" viewBox="0 0 10 9"><ellipse cx="4.6" cy="3.7" rx="4.2" ry="3.5" fill="#a8a8a8"/><path d="M1.5 5.6 L0.6 8.3 L3.8 6.9 Z" fill="#a8a8a8"/></svg></div>
<div class="a" style="left:36px;top:488.6px;width:713px;height:1px;border-top:1px dotted #f7f7f7"></div>
<!-- pagination -->
<div class="pg" style="left:616px;width:14.2px"><svg width="14" height="15" viewBox="0 0 14 15"><path d="M8.4 5.1 L5.9 7.5 L8.4 9.9" stroke="#707070" stroke-width="1.5" fill="none"/></svg></div>
<div class="pg" style="left:633px">1</div>
<div class="pg" style="left:649px">2</div>
<div class="pg" style="left:664.7px">3</div>
<div class="pg" style="left:680.7px">4</div>
<div class="pg" style="left:696.5px">5</div>
<div class="pg" style="left:712px;width:13.6px;background:#555;color:#fff;font-weight:bold">6</div>
<div class="pg" style="left:728.2px;width:14.6px;background:#efefef"><svg width="14" height="15" viewBox="0 0 14 15"><path d="M6 4.8 L8.4 7.6 L6 10.4" stroke="#b0b0b0" stroke-width="1.2" fill="none"/></svg></div>
<div class="a" style="left:35px;top:530.8px;width:715px;height:1.2px;background:#e6e6e6"></div>
<!-- watermark -->
<svg class="a" style="left:0;top:0" width="768" height="532" viewBox="0 0 768 532"><rect x="186.8" y="268.2" width="48.5" height="49.8" rx="6.5" fill="rgb(125,118,160)" opacity="0.38"/>
<defs><filter id="bl" x="-20%" y="-20%" width="140%" height="140%"><feGaussianBlur stdDeviation="1.1"/></filter></defs><g opacity="0.8" filter="url(#bl)"><path d="M211.3 276 C204 280 202 292 203 312 L219.6 312 C220.6 292 218.6 280 211.3 276Z" fill="rgba(90,80,115,0.18)"/>
<ellipse cx="211.4" cy="285" rx="3.6" ry="5" fill="rgba(235,160,215,0.55)"/>
<ellipse cx="211.4" cy="301" rx="3" ry="3.5" fill="rgba(235,160,215,0.45)"/>
<path d="M206 277 C199 284 197 292 200 300 C201 305 202 309 203 314" stroke="rgba(225,255,235,0.65)" stroke-width="1.6" fill="none"/>
<path d="M216.8 277 C223.8 284 225.8 292 222.8 300 C221.8 305 220.8 309 219.8 314" stroke="rgba(225,255,235,0.65)" stroke-width="1.6" fill="none"/>
<path d="M199 296 L195 304 M223.8 296 L227.8 304" stroke="rgba(225,255,235,0.5)" stroke-width="1.2"/></g></svg>
<svg class="a" style="left:0;top:0" width="768" height="532" viewBox="0 0 768 532">
<defs>
<mask id="mb" maskUnits="userSpaceOnUse" x="0" y="0" width="768" height="532"><g font-family="Liberation Sans" font-weight="bold" font-size="36.8" stroke-linejoin="round"><g fill="#fff" stroke="#fff" stroke-width="4.6"><text transform="translate(242.01 306.00) scale(0.932 1)" x="0" y="0">F</text><text transform="translate(265.99 306.00) scale(1.068 1)" x="0" y="0">O</text><text transform="translate(300.49 306.00) scale(0.938 1)" x="0" y="0">R</text><text transform="translate(329.91 306.00) scale(0.727 1)" x="0" y="0">E</text><text transform="translate(352.91 306.00) scale(1.213 1)" x="0" y="0">X</text><text transform="translate(469.08 306.00) scale(1.310 1)" x="0" y="0">M</text><text transform="translate(510.28 306.00) scale(1.110 1)" x="0" y="0">A</text><text transform="translate(543.96 306.00) scale(0.868 1)" x="0" y="0">L</text><text transform="translate(565.98 306.00) scale(0.821 1)" x="0" y="0">L</text></g><g fill="#000" stroke="#000" stroke-width="2.4"><text transform="translate(242.01 306.00) scale(0.932 1)" x="0" y="0">F</text><text transform="translate(265.99 306.00) scale(1.068 1)" x="0" y="0">O</text><text transform="translate(300.49 306.00) scale(0.938 1)" x="0" y="0">R</text><text transform="translate(329.91 306.00) scale(0.727 1)" x="0" y="0">E</text><text transform="translate(352.91 306.00) scale(1.213 1)" x="0" y="0">X</text><text transform="translate(469.08 306.00) scale(1.310 1)" x="0" y="0">M</text><text transform="translate(510.28 306.00) scale(1.110 1)" x="0" y="0">A</text><text transform="translate(543.96 306.00) scale(0.868 1)" x="0" y="0">L</text><text transform="translate(565.98 306.00) scale(0.821 1)" x="0" y="0">L</text></g></g></mask>
<mask id="mp" maskUnits="userSpaceOnUse" x="0" y="0" width="768" height="532"><g font-family="Liberation Sans" font-weight="bold" font-size="36.8" stroke-linejoin="round"><g fill="#fff" stroke="#fff" stroke-width="4.6"><text transform="translate(387.07 306.00) scale(0.785 1)" x="0" y="0">E</text><text transform="translate(404.07 306.00) scale(1.345 1)" x="0" y="0">A</text><text transform="translate(444.27 306.00) scale(0.971 1)" x="0" y="0">S</text></g><g fill="#000" stroke="#000" stroke-width="2.4"><text transform="translate(387.07 306.00) scale(0.785 1)" x="0" y="0">E</text><text transform="translate(404.07 306.00) scale(1.345 1)" x="0" y="0">A</text><text transform="translate(444.27 306.00) scale(0.971 1)" x="0" y="0">S</text></g></g></mask>
</defs>
<g font-family="Liberation Sans" font-weight="bold" font-size="36.8" stroke-linejoin="round">
<g fill="#fff" stroke="#fff" stroke-width="2.4" opacity="0.28"><text transform="translate(242.01 306.00) scale(0.932 1)" x="0" y="0">F</text><text transform="translate(265.99 306.00) scale(1.068 1)" x="0" y="0">O</text><text transform="translate(300.49 306.00) scale(0.938 1)" x="0" y="0">R</text><text transform="translate(329.91 306.00) scale(0.727 1)" x="0" y="0">E</text><text transform="translate(352.91 306.00) scale(1.213 1)" x="0" y="0">X</text><text transform="translate(469.08 306.00) scale(1.310 1)" x="0" y="0">M</text><text transform="translate(510.28 306.00) scale(1.110 1)" x="0" y="0">A</text><text transform="translate(543.96 306.00) scale(0.868 1)" x="0" y="0">L</text><text transform="translate(565.98 306.00) scale(0.821 1)" x="0" y="0">L</text></g>
<g fill="#f3acd2" stroke="#f3acd2" stroke-width="2.4" opacity="0.5"><text transform="translate(387.07 306.00) scale(0.785 1)" x="0" y="0">E</text><text transform="translate(404.07 306.00) scale(1.345 1)" x="0" y="0">A</text><text transform="translate(444.27 306.00) scale(0.971 1)" x="0" y="0">S</text></g>
</g>
<rect x="0" y="0" width="768" height="532" fill="#b3c3cf" mask="url(#mb)"/>
<rect x="0" y="0" width="768" height="532" fill="#e7a6c8" mask="url(#mp)" opacity="0.9"/>
</svg>
</div></body></html>
